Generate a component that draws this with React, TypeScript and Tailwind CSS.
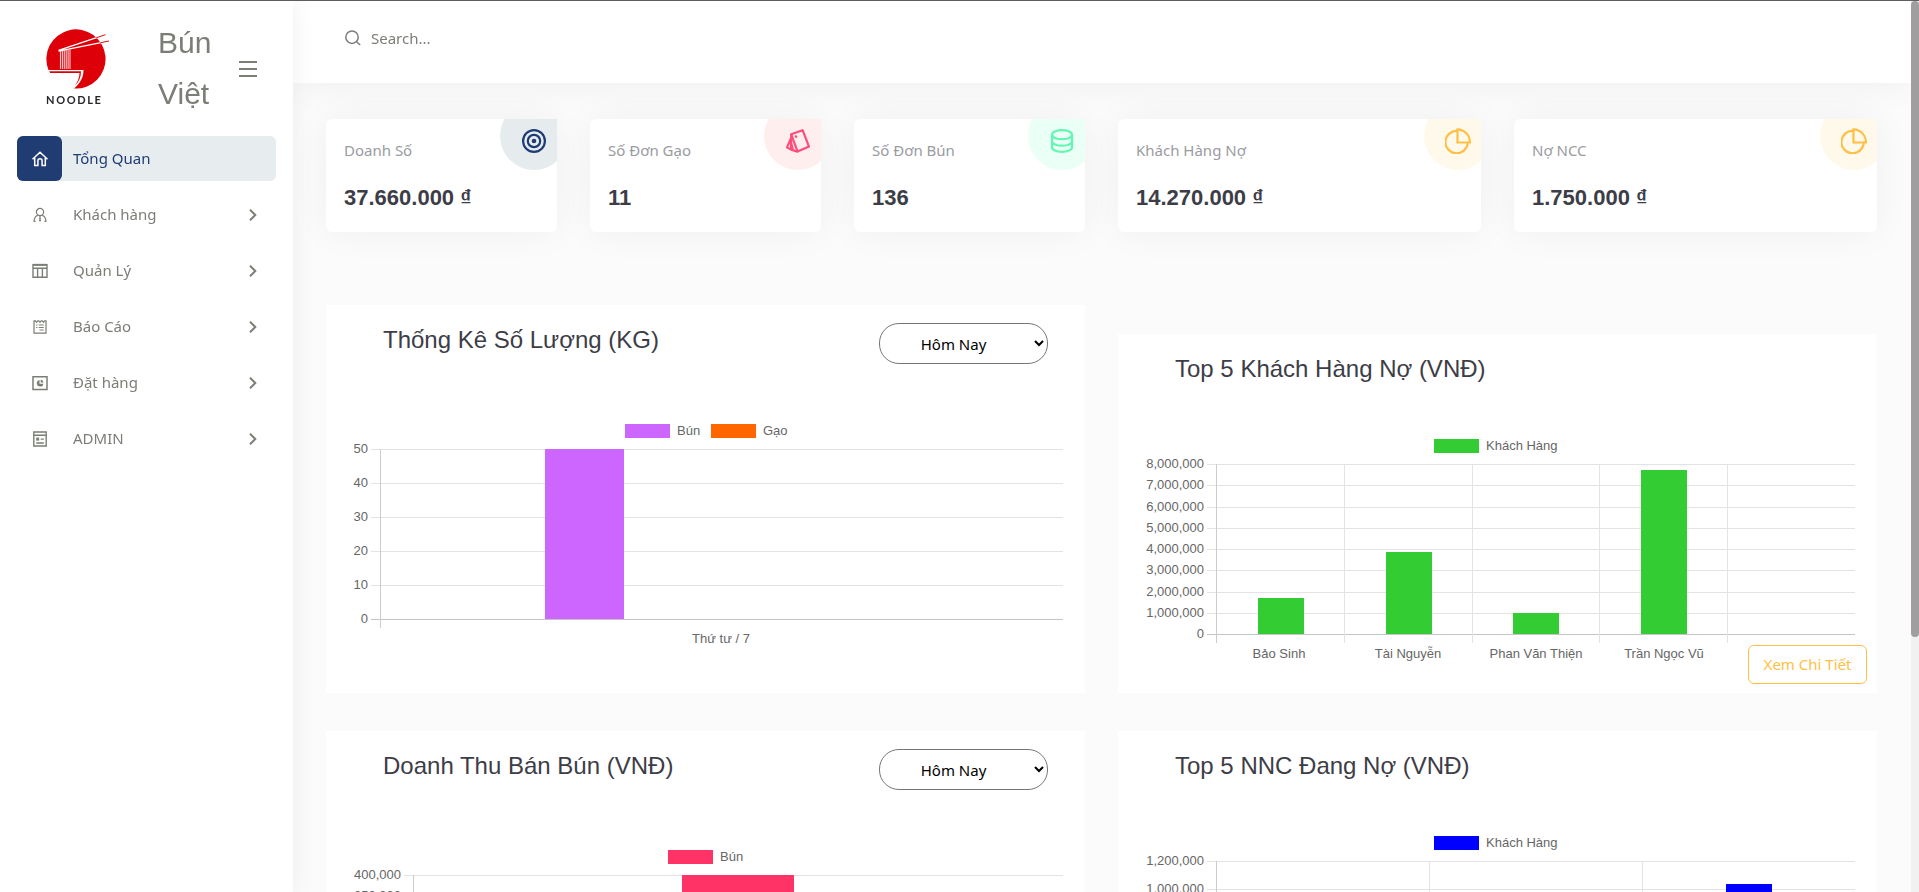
import React from "react";

type Series = { label: string; color: string };
type Bar = { x: number; width: number; value: number; color: string };

type BarChartProps = {
  title: string;
  series: Series[];
  left: number;
  max: number;
  step: number;
  columns: number;
  gridColumns?: boolean;
  categories: { x: number; label: string }[];
  bars: Bar[];
};

function BarChart({ title, series, left, max, step, columns, gridColumns, categories, bars }: BarChartProps) {
  const right = 737;
  const top = 29;
  const bottom = 199;
  const ticks: number[] = [];
  for (let v = 0; v <= max; v += step) ticks.push(v);
  const y = (v: number) => Math.round(bottom - (v / max) * (bottom - top));
  const widths = series.map((s) => 52 + Math.round(s.label.length * 7.5));
  const total = widths.reduce((a, b) => a + b, 0) + 11 * (series.length - 1);
  let cursor = Math.round((759 - total) / 2);
  const legend = series.map((s, i) => {
    const x = cursor;
    cursor += widths[i] + 11;
    return { ...s, x };
  });
  return (
    <svg
      viewBox="0 0 759 240"
      role="img"
      aria-label={title}
      className="block h-auto w-full font-['Liberation_Sans',Arial,sans-serif] text-[13px]"
      fill="#666666"
    >
      {legend.map((l) => (
        <g key={l.label}>
          <rect x={l.x} y="4" width="45" height="14" fill={l.color} />
          <text x={l.x + 52} y="15">{l.label}</text>
        </g>
      ))}
      <g shapeRendering="crispEdges">
        {ticks.map((v) => (
          <rect key={v} x={left - 9} y={y(v)} width={right - left + 9} height="1" fill={v === 0 ? "#c4c4c4" : "#e3e3e3"} />
        ))}
        <rect x={left} y={top} width="1" height={bottom - top + 9} fill="#cccccc" />
        {gridColumns &&
          Array.from({ length: columns - 1 }, (_, i) => (
            <rect
              key={i}
              x={Math.round(left + ((right - left) * (i + 1)) / columns)}
              y={top}
              width="1"
              height={bottom - top + 9}
              fill="#e3e3e3"
            />
          ))}
        {bars.map((b) => (
          <rect key={b.x} x={b.x} y={y(b.value)} width={b.width} height={bottom - y(b.value)} fill={b.color} />
        ))}
      </g>
      {ticks.map((v) => (
        <text key={v} x={left - 12} y={y(v) + 4} textAnchor="end">{v.toLocaleString("en-US")}</text>
      ))}
      {categories.map((c) => (
        <text key={c.label} x={c.x} y={bottom + 24} textAnchor="middle">{c.label}</text>
      ))}
    </svg>
  );
}

function PeriodSelect({ label }: { label: string }) {
  return (
    <select
      aria-label={label}
      defaultValue="today"
      className="h-[41px] w-[169px] rounded-[20px] border border-[#767676] bg-white pr-2 text-center text-[15px] text-black"
    >
      <option value="today">Hôm Nay</option>
      <option value="week">Tuần Này</option>
      <option value="month">Tháng Này</option>
    </select>
  );
}

function ChartCard({ title, children }: { title: string; children: React.ReactNode }) {
  return (
    <section className="bg-white pb-[33px]">
      <div className="flex h-[115px] items-start justify-between pt-[18px] pr-[37px] pl-[57px]">
        <h2 className="font-['Liberation_Sans',Arial,sans-serif] text-2xl leading-[34px] text-[#3d3d47]">{title}</h2>
        <PeriodSelect label={title} />
      </div>
      {children}
    </section>
  );
}

function TopCard({ title, children, className = "" }: { title: string; children: React.ReactNode; className?: string }) {
  return (
    <section className={"relative bg-white pb-[18px] " + className}>
      <div className="flex h-[101px] items-start pt-[18px] pl-[57px]">
        <h2 className="font-['Liberation_Sans',Arial,sans-serif] text-2xl leading-[34px] text-[#3d3d47]">{title}</h2>
      </div>
      {children}
      <a
        href="#"
        className="absolute right-[10px] bottom-[9px] flex h-[39px] w-[119px] items-center justify-center rounded-md border border-[#ffbf43] text-[15px] text-[#ffbf43]"
      >
        Xem Chi Tiết
      </a>
    </section>
  );
}

const TargetIcon = () => (
  <svg viewBox="0 0 24 24" className="size-6" fill="none" stroke="currentColor" strokeWidth="2.200">
    <circle cx="12" cy="12" r="10.900" />
    <circle cx="12" cy="12" r="6.200" />
    <circle cx="12" cy="12" r="2.300" fill="currentColor" stroke="none" />
  </svg>
);
const TagsIcon = () => (
  <svg viewBox="0 0 24 24" className="size-6" fill="none" stroke="currentColor" strokeWidth="2.200" strokeLinejoin="round">
    <path d="M5.200 5.300 16.600 1.200 23 17.600 11.600 22.600Z" />
    <path d="M5.200 5.300 5 20.600 11.600 22.600M5.100 9 1 18.400 5 20.600M5.100 13.500l1.800 7.500" />
    <circle cx="10" cy="7.600" r="1.300" fill="currentColor" stroke="none" />
  </svg>
);
const DatabaseIcon = () => (
  <svg viewBox="0 0 24 24" className="size-6" fill="none" stroke="currentColor" strokeWidth="2.200">
    <ellipse cx="12" cy="5.700" rx="10" ry="4.500" />
    <path d="M2 5.700V18.400c0 2.500 4.500 4.500 10 4.500s10-2 10-4.500V5.700M2 12.200c0 2.500 4.500 4.500 10 4.500s10-2 10-4.500" />
  </svg>
);
const PieIcon = () => (
  <svg viewBox="0 0 26 26" className="size-[26px]" fill="none" stroke="currentColor" strokeWidth="2.200">
    <path d="M12.500 2.900A11.200 11.200 0 1 0 22.800 14.500" />
    <path d="M12.500 1.300V14.500H25C25 7 19.500 1.500 12.500 1.300Z" />
  </svg>
);

type Stat = { label: string; value: string; span: string; bubble: string; icon: React.ReactNode };

const stats: Stat[] = [
  { label: "Doanh Số", value: "37.660.000 ₫", span: "col-span-2", bubble: "bg-[#e6ecee] text-[#1f3c73]", icon: <TargetIcon /> },
  { label: "Số Đơn Gạo", value: "11", span: "col-span-2", bubble: "bg-[#ffeeee] text-[#ff4c7b]", icon: <TagsIcon /> },
  { label: "Số Đơn Bún", value: "136", span: "col-span-2", bubble: "bg-[#eafff6] text-[#64f7b3]", icon: <DatabaseIcon /> },
  { label: "Khách Hàng Nợ", value: "14.270.000 ₫", span: "col-span-3", bubble: "bg-[#fff9ec] text-[#ffbf43]", icon: <PieIcon /> },
  { label: "Nợ NCC", value: "1.750.000 ₫", span: "col-span-3", bubble: "bg-[#fff9ec] text-[#ffbf43]", icon: <PieIcon /> },
];

function StatCard({ stat }: { stat: Stat }) {
  return (
    <section className={"relative rounded-md bg-white shadow-[0_0_37px_rgba(8,21,66,0.05)] " + stat.span}>
      <div className="absolute inset-0 overflow-hidden rounded-md rounded-tr-none">
        <div className={"absolute -top-[17px] -right-[11px] flex size-[68px] items-center justify-center rounded-full pt-[10px] " + stat.bubble}>
          {stat.icon}
        </div>
      </div>
      <div className="relative flex h-[113px] flex-col px-[18px] pt-[19px]">
        <p className="text-[15px] leading-6 text-[#9a9b9f]">{stat.label}</p>
        <p className="mt-5 font-['Liberation_Sans',Arial,sans-serif] text-[22px] leading-8 font-bold text-[#3d3d47]">{stat.value}</p>
      </div>
    </section>
  );
}

const HomeIcon = () => (
  <svg viewBox="0 0 16 16" className="size-4" fill="none" stroke="currentColor" strokeWidth="1.500">
    <path d="M.5 8.200 8 1.200l7.500 7M2.700 6.600v8h3.200V9.900a2.100 2.100 0 0 1 4.200 0v4.700h3.200v-8" />
  </svg>
);
const UserIcon = () => (
  <svg viewBox="0 0 16 16" className="size-4" fill="none" stroke="currentColor" strokeWidth="1.200">
    <circle cx="8" cy="5" r="3.600" />
    <path d="M2 14.800c0-3.300 1.400-5.500 3.700-6.500M14 14.800c0-3.300-1.400-5.500-3.700-6.500M2 14.300h1.500M14 14.300h-1.500" />
    <path d="M8 9v3" />
    <path d="m8 10.500 1 3-1 1.500-1-1.500Z" fill="currentColor" stroke="none" />
  </svg>
);
const TableIcon = () => (
  <svg viewBox="0 0 16 16" className="size-4" fill="none" stroke="currentColor" strokeWidth="1.400">
    <path d="M1 1.800h14v12.500H1ZM1 5.300h14M5.600 5.200v9M10.400 5.200v9" />
    <path d="M1 1.800h14" strokeWidth="1.900" />
  </svg>
);
const ReportIcon = () => (
  <svg viewBox="0 0 16 16" className="size-4" fill="none" stroke="currentColor" strokeWidth="1.200">
    <path d="M2 1.800h1.500l1 1.500 1.200-1.500h1.100L8 3.300l1.200-1.500h1.100l1.200 1.500 1-1.500H14v12.400H2Z" />
    <path d="M4.200 6h1.300M6.700 6h5M4.200 8.500h1.300M6.700 8.500h5M7.500 11h4.200" />
  </svg>
);
const OrderIcon = () => (
  <svg viewBox="0 0 16 16" className="size-4" fill="none" stroke="currentColor" strokeWidth="1.500">
    <path d="M1 1.800h14v12.600H1Z" />
    <path d="M7.500 5a3.300 3.300 0 1 0 3.900 3.700H7.500Z" fill="currentColor" stroke="none" />
    <path d="M8.700 4.700a3 3 0 0 1 2.800 2.800H8.700Z" fill="currentColor" stroke="none" />
  </svg>
);
const AdminIcon = () => (
  <svg viewBox="0 0 16 16" className="size-4" fill="none" stroke="currentColor" strokeWidth="1.400">
    <path d="M1.800 1h12.400v14H1.800ZM1.800 4.200h12.400" />
    <path d="M4.200 6.600h3v3h-3Z" fill="currentColor" stroke="none" />
    <path d="M8.700 8.100h3.200M4.200 12h7.700" />
  </svg>
);

const menu = [
  { label: "Khách hàng", icon: <UserIcon /> },
  { label: "Quản Lý", icon: <TableIcon /> },
  { label: "Báo Cáo", icon: <ReportIcon /> },
  { label: "Đặt hàng", icon: <OrderIcon /> },
  { label: "ADMIN", icon: <AdminIcon /> },
];

function Logo() {
  return (
    <a href="#" className="flex w-[66px] flex-col" aria-label="Noodle">
      <svg viewBox="0 0 66 62" className="h-[62px] w-[66px]" fill="none">
        <defs>
          <clipPath id="disc">
            <circle cx="30" cy="31" r="29.600" />
          </clipPath>
        </defs>
        <path d="M40 13.200 59.500 6.700M40 17.600 63 13" stroke="#de0a10" strokeWidth="1" />
        <path d="M2.500 42A29.600 29.600 0 1 1 28 60.500C33.500 56 37.500 50 37.500 42Z" fill="#de0009" />
        <path d="M3.300 43.300H35C35 49 33 54 29 57.500 32 53 33.500 49 33.500 44.900H4.200Z" fill="#de0009" />
        <g clipPath="url(#disc)" stroke="#fff">
          <path d="M12.500 22.300 59.500 6.700M12.500 23.200 63 13" strokeWidth="1.300" />
          <path d="M14.500 22V41M16.400 22V41M18.300 22V41M20.200 22V41M22.100 22V41M24 21.500V41" strokeWidth="1.100" opacity="0.800" />
        </g>
      </svg>
      <span className="font-[Lato,sans-serif] text-[11px] leading-5 font-bold tracking-[0.15em] text-[#26262a]">NOODLE</span>
    </a>
  );
}

function Sidebar() {
  return (
    <aside className="sticky top-0 z-20 h-screen w-[293px] shrink-0 self-start bg-white text-[#7b7e76] shadow-[0_0_21px_rgba(89,102,122,0.1)]">
      <div className="flex h-[135px] items-start pt-4 pl-[46px]">
        <div className="pt-[11px]">
          <Logo />
        </div>
        <h1 className="ml-[46px] w-[54px] font-['Liberation_Sans',Arial,sans-serif] text-[30px] leading-[51px]">Bún Việt</h1>
        <button type="button" aria-label="Toggle menu" className="mt-11 ml-[27px] flex w-[18px] flex-col gap-[5px]">
          <span className="h-[2px] w-full bg-current" />
          <span className="h-[2px] w-full bg-current" />
          <span className="h-[2px] w-full bg-current" />
        </button>
      </div>
      <nav className="flex flex-col gap-[11px] px-[17px] text-[15px]">
        <a href="#" className="flex h-[45px] items-center rounded-md bg-[#e7ecef] text-[#1f3c73]">
          <span className="flex size-[45px] items-center justify-center rounded-md bg-[#1f3c73] text-white">
            <HomeIcon />
          </span>
          <span className="ml-[11px]">Tổng Quan</span>
        </a>
        {menu.map((m) => (
          <a key={m.label} href="#" className="flex h-[45px] items-center">
            <span className="flex size-[45px] items-center justify-center">{m.icon}</span>
            <span className="ml-[11px] flex-1">{m.label}</span>
            <svg viewBox="0 0 8 12" className="mr-[19px] h-3 w-2" fill="none" stroke="currentColor" strokeWidth="2">
              <path d="M1 .8 6.300 6 1 11.200" />
            </svg>
          </a>
        ))}
      </nav>
    </aside>
  );
}

export default function App() {
  return (
    <div className="flex h-screen border-t border-[#5f5d62] bg-[#fbfbfb] font-['Noto_Sans','Open_Sans',sans-serif]">
      <div className="flex min-w-0 flex-1 overflow-y-auto [scrollbar-width:none]">
        <Sidebar />
        <div className="min-w-0 flex-1">
          <header className="sticky top-0 z-10 flex h-[82px] items-start bg-white pt-[25px] pl-[52px] shadow-[0_0_37px_rgba(8,21,66,0.06)]">
            <label className="flex items-center text-[#7b7e76]">
              <svg viewBox="0 0 16 16" className="size-4" fill="none" stroke="currentColor" strokeWidth="1.500">
                <circle cx="7" cy="7.200" r="6.200" />
                <path d="m11.500 11.700 3.700 3.300" />
              </svg>
              <input
                type="text"
                aria-label="Search"
                placeholder="Search..."
                className="ml-[10px] w-80 bg-transparent text-[15px] leading-6 outline-none placeholder:text-[#7b7e76]"
              />
            </label>
          </header>
          <main className="pt-9 pr-[34px] pb-[130px] pl-[33px]">
            <div className="grid grid-cols-12 gap-x-[33px]">
              {stats.map((s) => (
                <StatCard key={s.label} stat={s} />
              ))}
            </div>
            <div className="mt-[73px] grid grid-cols-2 items-start gap-x-[33px] gap-y-[38px]">
              <ChartCard title="Thống Kê Số Lượng (KG)">
                <BarChart
                  title="Thống Kê Số Lượng (KG)"
                  series={[{ label: "Bún", color: "#cc66ff" }, { label: "Gạo", color: "#ff6600" }]}
                  left={54}
                  max={50}
                  step={10}
                  columns={1}
                  categories={[{ x: 395, label: "Thứ tư / 7" }]}
                  bars={[{ x: 219, width: 79, value: 50, color: "#cc66ff" }]}
                />
              </ChartCard>
              <TopCard title="Top 5 Khách Hàng Nợ (VNĐ)" className="mt-[29px]">
                <BarChart
                  title="Top 5 Khách Hàng Nợ (VNĐ)"
                  series={[{ label: "Khách Hàng", color: "#33cc33" }]}
                  left={98}
                  max={8000000}
                  step={1000000}
                  columns={5}
                  gridColumns
                  categories={[
                    { x: 161, label: "Bảo Sinh" },
                    { x: 290, label: "Tài Nguyễn" },
                    { x: 418, label: "Phan Văn Thiện" },
                    { x: 546, label: "Trần Ngọc Vũ" },
                  ]}
                  bars={[
                    { x: 140, width: 46, value: 1700000, color: "#33cc33" },
                    { x: 268, width: 46, value: 3860000, color: "#33cc33" },
                    { x: 395, width: 46, value: 970000, color: "#33cc33" },
                    { x: 523, width: 46, value: 7700000, color: "#33cc33" },
                  ]}
                />
              </TopCard>
              <ChartCard title="Doanh Thu Bán Bún (VNĐ)">
                <BarChart
                  title="Doanh Thu Bán Bún (VNĐ)"
                  series={[{ label: "Bún", color: "#ff3366" }]}
                  left={87}
                  max={400000}
                  step={50000}
                  columns={1}
                  categories={[{ x: 412, label: "Thứ tư / 7" }]}
                  bars={[{ x: 356, width: 112, value: 400000, color: "#ff3366" }]}
                />
              </ChartCard>
              <TopCard title="Top 5 NNC Đang Nợ (VNĐ)">
                <BarChart
                  title="Top 5 NNC Đang Nợ (VNĐ)"
                  series={[{ label: "Khách Hàng", color: "#0000ff" }]}
                  left={98}
                  max={1200000}
                  step={200000}
                  columns={3}
                  gridColumns
                  categories={[]}
                  bars={[{ x: 608, width: 46, value: 1040000, color: "#0000ff" }]}
                />
              </TopCard>
            </div>
          </main>
        </div>
      </div>
      <div aria-hidden="true" className="w-2 shrink-0 bg-[#f1f1f1]">
        <div className="h-[71.4%] rounded-full bg-[#a09e9f]" />
      </div>
    </div>
  );
}
